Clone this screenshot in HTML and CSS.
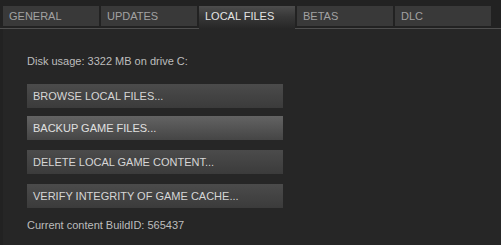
FILE: index.html
```html
<!DOCTYPE html>
<html>
<head>
<meta charset="utf-8">
<link rel="stylesheet" href="styles.css">
</head>
<body>
<div class="tabs">
  <div class="tab">GENERAL</div>
  <div class="tab">UPDATES</div>
  <div class="tab active">LOCAL FILES</div>
  <div class="tab">BETAS</div>
  <div class="tab">DLC</div>
</div>
<div class="panel">
  <div class="info">Disk usage: 3322 MB on drive C:</div>
  <div class="buttons">
    <div class="btn">BROWSE LOCAL FILES...</div>
    <div class="btn hover tight">BACKUP GAME FILES...</div>
    <div class="btn">DELETE LOCAL GAME CONTENT...</div>
    <div class="btn">VERIFY INTEGRITY OF GAME CACHE...</div>
  </div>
  <div class="info build">Current content BuildID: 565437</div>
</div>
</body>
</html>
```
FILE: styles.css
```css
html, body {
  margin: 0;
  padding: 0;
}
body {
  width: 501px;
  height: 245px;
  overflow: hidden;
  background: #222222;
  font-family: "Liberation Sans", Arial, sans-serif;
  font-size: 11px;
}
.tabs {
  display: flex;
  align-items: flex-start;
  gap: 2px;
  height: 22px;
  padding: 6px 0 0 3px;
  border-bottom: 1px solid #4f4f4f;
  margin-left: 0;
}
.tab {
  width: 96px;
  height: 20px;
  box-sizing: border-box;
  padding-left: 6px;
  line-height: 20px;
  background: #393939;
  color: #a2a2a2;
  flex: none;
}
.tab.active {
  height: 23px;
  background: linear-gradient(to bottom, #4d4d4d 0%, #383838 45%, #262626 100%);
  color: #e4e4e4;
}
.tabs {
  box-sizing: content-box;
}
.panel {
  margin-left: 3px;
  background: #262626;
  height: 216px;
  padding: 26px 0 0 24px;
  box-sizing: border-box;
}
.info {
  line-height: 13px;
  color: #bdbdbd;
}
.buttons {
  display: flex;
  flex-direction: column;
  margin-top: 16px;
}
.btn {
  width: 256px;
  height: 24px;
  line-height: 24px;
  box-sizing: border-box;
  padding-left: 6px;
  color: #d6d6d6;
  background: linear-gradient(to bottom, #4b4b4b, #3b3b3b);
}
.btn + .btn {
  margin-top: 10px;
}
.btn.tight {
  margin-top: 8px;
}
.btn.hover {
  background: linear-gradient(to bottom, #636363, #454545);
  color: #e0e0e0;
}
.build {
  margin-top: 11px;
}
```
